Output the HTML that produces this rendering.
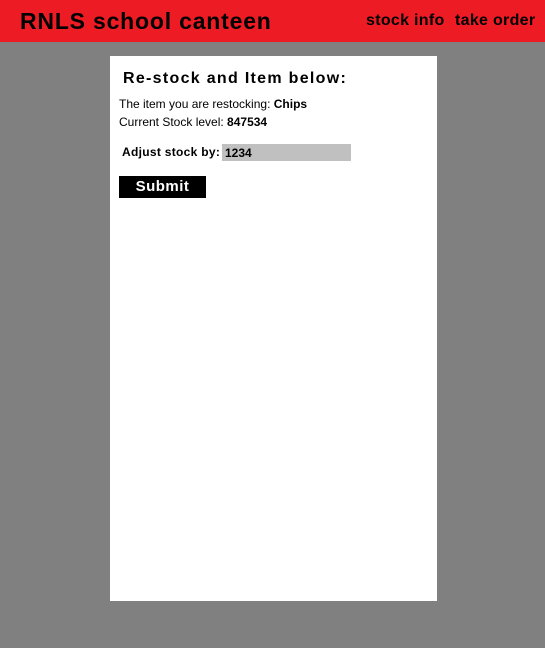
<!DOCTYPE html>
<html><head><style>
*{margin:0;padding:0;box-sizing:border-box}
body{width:545px;height:648px;background:#808080;font-family:"Liberation Sans",sans-serif;position:relative;overflow:hidden}
.hdr{position:absolute;left:0;top:0;width:545px;height:42px;background:#ED1C24}
.t{position:absolute;left:20px;top:8px;font-size:23px;font-weight:bold;letter-spacing:0.8px;color:#000}
.n{position:absolute;top:12px;font-size:16px;font-weight:bold;color:#000;letter-spacing:0.3px}
.card{position:absolute;left:110px;top:56px;width:327px;height:545px;background:#fff}
.a{position:absolute;white-space:nowrap;color:#000}
</style></head><body>
<div class="hdr">
<div class="t">RNLS school canteen</div>
<div class="n" style="left:366px">stock info</div>
<div class="n" style="left:455px">take order</div>
</div>
<div class="card">
<div class="a" style="left:13px;top:14px;font-size:16px;font-weight:bold;letter-spacing:1.3px">Re-stock and Item below:</div>
<div class="a" style="left:9px;top:41px;font-size:12px">The item you are restocking: <b>Chips</b></div>
<div class="a" style="left:9px;top:59px;font-size:12px">Current Stock level: <b>847534</b></div>
<div class="a" style="left:12px;top:89px;font-size:12px;font-weight:bold;letter-spacing:0.3px">Adjust stock by:</div>
<div class="a" style="left:112px;top:88px;width:129px;height:17px;background:#c0c0c0;font-size:12px;font-weight:bold;padding:2px 0 0 3px">1234</div>
<div class="a" style="left:9px;top:120px;width:87px;height:22px;background:#000;color:#fff;font-size:15px;font-weight:bold;text-align:center;line-height:21px;letter-spacing:0.5px">Submit</div>
</div>
</body></html>
